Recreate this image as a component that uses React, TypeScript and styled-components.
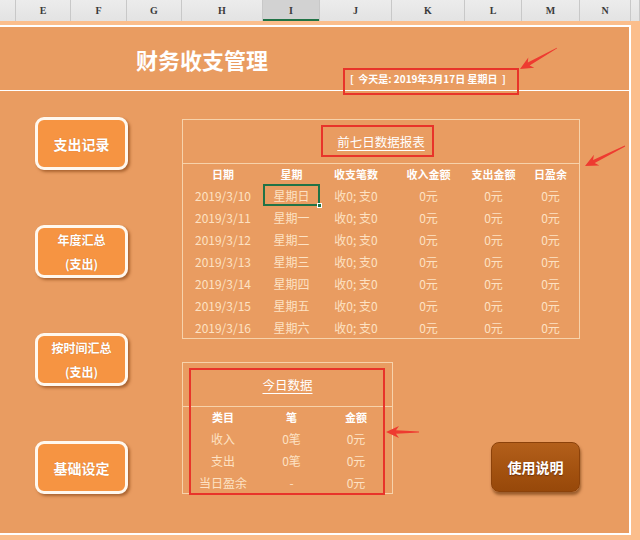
import React from 'react';
import styled, { createGlobalStyle } from 'styled-components';

const Global = createGlobalStyle`
  html, body { margin: 0; padding: 0; }
  body {
    background: #fbbe8c;
    width: 640px;
    height: 540px;
    overflow: hidden;
    font-family: "Noto Sans CJK SC", "Noto Sans", sans-serif;
  }
`;

const Page = styled.div`
  position: relative;
  width: 640px;
  height: 540px;
`;

const ColHeader = styled.div`
  display: grid;
  grid-template-columns: 16px 55px 56px 55px 81px 57px 72px 73px 57px 58px 51px 1fr;
  height: 21px;
  background: linear-gradient(#ececec, #e3e3e3);
`;

const ColCell = styled.div<{ $sel?: boolean }>`
  border-right: 1px solid #c8c8c8;
  display: flex;
  align-items: center;
  justify-content: center;
  font-family: "Liberation Serif", "DejaVu Serif", serif;
  font-size: 10px;
  font-weight: bold;
  color: #3a3a3a;
  background: ${(p) => (p.$sel ? '#d2d2d2' : 'transparent')};
  box-shadow: ${(p) => (p.$sel ? 'inset 0 -2px 0 #217346' : 'none')};
`;

const Sheet = styled.div`
  margin-top: 4px;
  width: 629px;
  height: 506px;
  background: #e99c61;
  border-top: 2px solid #fff;
  border-right: 2px solid #fff;
  border-bottom: 2px solid #fff;
  display: flex;
  flex-direction: column;
`;

const Header = styled.div`
  height: 63px;
  border-bottom: 1px solid #fff;
  display: grid;
  grid-template-columns: 136px 214px auto;
`;

const Title = styled.h1`
  grid-column: 2;
  margin: 17px 0 0;
  font-size: 22px;
  line-height: 30px;
  font-weight: bold;
  color: #fff;
  white-space: nowrap;
`;

const DateText = styled.div`
  grid-column: 3;
  margin-top: 45px;
  font-size: 10px;
  line-height: 14px;
  font-weight: bold;
  color: #fff;
  white-space: pre;
`;

const Body = styled.div`
  flex: 1;
  display: flex;
  padding: 26px 0 0 35px;
`;

const NavColumn = styled.div`
  display: flex;
  flex-direction: column;
  gap: 55px;
  width: 93px;
`;

const NavButton = styled.div<{ $big?: boolean }>`
  height: 53px;
  box-sizing: border-box;
  border: 3px solid #fff8ef;
  border-radius: 9px;
  background: #f69442;
  box-shadow: 2px 2px 3px rgba(120, 55, 10, 0.55);
  display: flex;
  flex-direction: column;
  align-items: center;
  justify-content: center;
  color: #fff;
  font-weight: bold;
  font-size: ${(p) => (p.$big ? '14px' : '12px')};
  line-height: 24px;
  text-shadow: 0 0 1px rgba(150, 70, 10, 0.4);
`;

const Center = styled.div`
  margin-left: 54px;
  padding-top: 2px;
  width: 398px;
  display: flex;
  flex-direction: column;
  gap: 23px;
`;

const Panel = styled.div<{ $w: number }>`
  width: ${(p) => p.$w}px;
  box-sizing: border-box;
  border: 1px solid #f7d2aa;
`;

const PanelTitle = styled.div`
  height: 43px;
  border-bottom: 1px solid #f7d2aa;
  display: flex;
  align-items: center;
  justify-content: center;
  font-size: 12.5px;
  color: #fff;
  text-decoration: underline;
  text-underline-offset: 3px;
`;

const Grid = styled.div<{ $cols: string }>`
  display: grid;
  grid-template-columns: ${(p) => p.$cols};
  grid-template-rows: 20px;
  grid-auto-rows: 22px;
`;

const HeadCell = styled.div`
  display: flex;
  align-items: center;
  justify-content: center;
  font-size: 11px;
  font-weight: bold;
  color: #fff;
`;

const Cell = styled.div<{ $sel?: boolean }>`
  position: relative;
  display: flex;
  align-items: center;
  justify-content: center;
  font-size: 12px;
  color: #fde2c4;
  white-space: nowrap;
  box-shadow: ${(p) => (p.$sel ? 'inset 0 0 0 2px #217346' : 'none')};
  &::after {
    content: '';
    display: ${(p) => (p.$sel ? 'block' : 'none')};
    position: absolute;
    right: -2px;
    bottom: -2px;
    width: 5px;
    height: 5px;
    background: #217346;
    border: 1px solid #fff;
    box-sizing: border-box;
  }
`;

const Row = styled.div`
  display: contents;
`;

const BottomRow = styled.div`
  display: flex;
  justify-content: space-between;
  align-items: flex-end;
`;

const HelpButton = styled.div`
  width: 89px;
  height: 50px;
  margin-bottom: 2px;
  box-sizing: border-box;
  border-radius: 8px;
  border: 1px solid #8c420a;
  background: linear-gradient(#b35f1b, #a2510f 60%, #97480a);
  box-shadow: 1px 3px 3px rgba(90, 40, 0, 0.55);
  display: flex;
  align-items: center;
  justify-content: center;
  color: #fff;
  font-weight: bold;
  font-size: 14px;
  text-shadow: 0 1px 1px rgba(60, 20, 0, 0.5);
`;

const Overlay = styled.svg`
  position: absolute;
  left: 0;
  top: 0;
  pointer-events: none;
`;

const cols = ['', 'E', 'F', 'G', 'H', 'I', 'J', 'K', 'L', 'M', 'N', ''];

const weekRows = [
  ['2019/3/10', '星期日'],
  ['2019/3/11', '星期一'],
  ['2019/3/12', '星期二'],
  ['2019/3/13', '星期三'],
  ['2019/3/14', '星期四'],
  ['2019/3/15', '星期五'],
  ['2019/3/16', '星期六'],
];

const todayRows = [
  ['收入', '0笔', '0元'],
  ['支出', '0笔', '0元'],
  ['当日盈余', '-', '0元'],
];

function arrow(x1: number, y1: number, x2: number, y2: number) {
  const dx = x2 - x1;
  const dy = y2 - y1;
  const L = Math.hypot(dx, dy);
  const ux = dx / L;
  const uy = dy / L;
  const px = -uy;
  const py = ux;
  const headLen = 13;
  const headW = 6;
  const neckW = 1.8;
  const tailW = 0.4;
  const bx = x2 - ux * headLen;
  const by = y2 - uy * headLen;
  const nx = x2 - ux * (headLen - 3);
  const ny = y2 - uy * (headLen - 3);
  const pts = [
    [x1 + px * tailW, y1 + py * tailW],
    [nx + px * neckW, ny + py * neckW],
    [bx + px * headW, by + py * headW],
    [x2, y2],
    [bx - px * headW, by - py * headW],
    [nx - px * neckW, ny - py * neckW],
    [x1 - px * tailW, y1 - py * tailW],
  ];
  return pts.map((p) => p.map((v) => v.toFixed(1)).join(',')).join(' ');
}

export default function App() {
  return (
    <Page>
      <Global />
      <ColHeader>
        {cols.map((c, i) => (
          <ColCell key={i} $sel={c === 'I'}>
            {c}
          </ColCell>
        ))}
      </ColHeader>
      <Sheet>
        <Header>
          <Title>财务收支管理</Title>
          <DateText>{'[  今天是: 2019年3月17日 星期日  ]'}</DateText>
        </Header>
        <Body>
          <NavColumn>
            <NavButton $big>支出记录</NavButton>
            <NavButton>
              <span>年度汇总</span>
              <span>(支出)</span>
            </NavButton>
            <NavButton>
              <span>按时间汇总</span>
              <span>(支出)</span>
            </NavButton>
            <NavButton $big>基础设定</NavButton>
          </NavColumn>
          <Center>
            <Panel $w={398}>
              <PanelTitle>前七日数据报表</PanelTitle>
              <Grid $cols="80px 57px 72px 73px 57px 57px">
                <Row>
                  {['日期', '星期', '收支笔数', '收入金额', '支出金额', '日盈余'].map((h) => (
                    <HeadCell key={h}>{h}</HeadCell>
                  ))}
                </Row>
                {weekRows.map(([d, w], i) => (
                  <Row key={d}>
                    <Cell>{d}</Cell>
                    <Cell $sel={i === 0}>{w}</Cell>
                    <Cell>收0; 支0</Cell>
                    <Cell>0元</Cell>
                    <Cell>0元</Cell>
                    <Cell>0元</Cell>
                  </Row>
                ))}
              </Grid>
            </Panel>
            <BottomRow>
              <Panel $w={211}>
                <PanelTitle>今日数据</PanelTitle>
                <Grid $cols="80px 57px 72px">
                  <Row>
                    {['类目', '笔', '金额'].map((h) => (
                      <HeadCell key={h}>{h}</HeadCell>
                    ))}
                  </Row>
                  {todayRows.map((r) => (
                    <Row key={r[0]}>
                      {r.map((v, j) => (
                        <Cell key={j}>{v}</Cell>
                      ))}
                    </Row>
                  ))}
                </Grid>
              </Panel>
              <HelpButton>使用说明</HelpButton>
            </BottomRow>
          </Center>
        </Body>
      </Sheet>
      <Overlay width={640} height={540} viewBox="0 0 640 540">
        <g fill="none" stroke="#e8342a" strokeWidth={2}>
          <rect x={344} y={69} width={174} height={25} />
          <rect x={322} y={126} width={111} height={30} />
          <rect x={190} y={369} width={194} height={125} />
        </g>
        <g fill="#ee3b30">
          <polygon points={arrow(557, 48, 520, 69)} />
          <polygon points={arrow(625, 146, 585, 166)} />
          <polygon points={arrow(419, 432, 386, 432)} />
        </g>
      </Overlay>
    </Page>
  );
}
